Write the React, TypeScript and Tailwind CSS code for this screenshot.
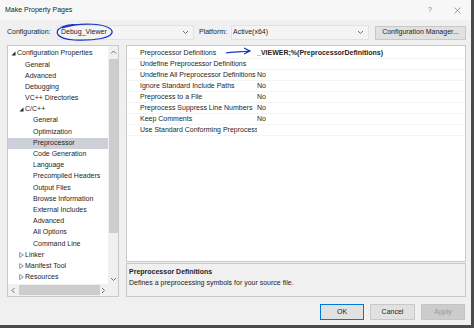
import React from 'react';

const font = { fontFamily: '"Liberation Sans", Arial, sans-serif' };

const treeRows: { label: string; level: number; icon?: 'open' | 'closed'; selected?: boolean }[] = [
  { label: 'Configuration Properties', level: 0, icon: 'open' },
  { label: 'General', level: 1 },
  { label: 'Advanced', level: 1 },
  { label: 'Debugging', level: 1 },
  { label: 'VC++ Directories', level: 1 },
  { label: 'C/C++', level: 1, icon: 'open' },
  { label: 'General', level: 2 },
  { label: 'Optimization', level: 2 },
  { label: 'Preprocessor', level: 2, selected: true },
  { label: 'Code Generation', level: 2 },
  { label: 'Language', level: 2 },
  { label: 'Precompiled Headers', level: 2 },
  { label: 'Output Files', level: 2 },
  { label: 'Browse Information', level: 2 },
  { label: 'External Includes', level: 2 },
  { label: 'Advanced', level: 2 },
  { label: 'All Options', level: 2 },
  { label: 'Command Line', level: 2 },
  { label: 'Linker', level: 1, icon: 'closed' },
  { label: 'Manifest Tool', level: 1, icon: 'closed' },
  { label: 'Resources', level: 1, icon: 'closed' },
  { label: 'XML Document Generator', level: 1, icon: 'closed' },
];

const props: [string, string][] = [
  ['Preprocessor Definitions', '_VIEWER;%(PreprocessorDefinitions)'],
  ['Undefine Preprocessor Definitions', ''],
  ['Undefine All Preprocessor Definitions', 'No'],
  ['Ignore Standard Include Paths', 'No'],
  ['Preprocess to a File', 'No'],
  ['Preprocess Suppress Line Numbers', 'No'],
  ['Keep Comments', 'No'],
  ['Use Standard Conforming Preprocessor', ''],
];

function Chevron({ dir = 'down' }: { dir?: 'down' | 'up' | 'left' | 'right' }) {
  const d = {
    down: 'M1 2 L3.5 4.5 L6 2',
    up: 'M1 4.5 L3.5 2 L6 4.5',
    left: 'M4.5 1 L2 3.5 L4.5 6',
    right: 'M2 1 L4.5 3.5 L2 6',
  }[dir];
  return (
    <svg width="7" height="7" viewBox="0 0 7 7" fill="none" stroke="#606060" strokeWidth="0.9">
      <path d={d} />
    </svg>
  );
}

function TreeIcon({ kind }: { kind: 'open' | 'closed' }) {
  return kind === 'open' ? (
    <svg width="5" height="5" viewBox="0 0 5 5"><path d="M4.5 0.5 L4.5 4.5 L0.5 4.5 Z" fill="#222" /></svg>
  ) : (
    <svg width="5" height="6" viewBox="0 0 5 6"><path d="M0.7 0.5 L4.3 3 L0.7 5.5 Z" fill="none" stroke="#666" strokeWidth="0.7" /></svg>
  );
}

export default function App() {
  return (
    <div className="w-[474px] h-[328px] bg-[#4a4a4a] text-[7px] text-[#1e1e1e] overflow-hidden" style={font}>
      <div className="w-[471px] h-[325px] bg-[#f0f0f0] flex flex-col relative">
        {/* title bar */}
        <div className="h-[20px] bg-[#f7f7f7] flex items-center pl-[5px] pr-[10px]">
          <span className="flex-1 text-[7px]">Make Property Pages</span>
          <span className="text-[#777] text-[7px] mr-[22px]">?</span>
          <svg width="7" height="7" viewBox="0 0 7 7" stroke="#777" strokeWidth="0.7"><path d="M0.5 0.5 L6.5 6.5 M6.5 0.5 L0.5 6.5" /></svg>
        </div>

        {/* configuration row */}
        <div className="flex items-center h-[15px] mt-[5px] pl-[7px]">
          <span className="w-[50px]">Configuration:</span>
          <div className="w-[137px] h-[15px] border border-[#e2e2e2] bg-[#f4f4f4] flex items-center pl-[3px] pr-[4px]">
            <span className="flex-1">Debug_Viewer</span>
            <Chevron />
          </div>
          <span className="ml-[5px] w-[32px]">Platform:</span>
          <div className="w-[138px] h-[15px] border border-[#e2e2e2] bg-[#f4f4f4] flex items-center pl-[1px] pr-[4px]">
            <span className="flex-1">Active(x64)</span>
            <Chevron />
          </div>
          <div className="ml-[6px] w-[91px] h-[14px] bg-[#e1e1e1] border border-[#c8c8c8] flex items-center justify-center">
            Configuration Manager...
          </div>
        </div>

        {/* main panels */}
        <div className="flex mt-[5px] pl-[7px] h-[252px]">
          {/* tree */}
          <div className="w-[112px] h-[252px] border border-[#c9c9c9] bg-white flex flex-col">
            <div className="flex flex-1 min-h-0">
              <div className="flex-1 pt-[2px] overflow-hidden">
                {treeRows.map((r, i) => (
                  <div
                    key={i}
                    className={`h-[11.2px] flex items-center whitespace-nowrap ${r.selected ? 'bg-[#cdd0d8]' : ''}`}
                    style={{ paddingLeft: 3 + r.level * 8 }}
                  >
                    <span className="w-[6px] flex items-center">{r.icon && <TreeIcon kind={r.icon} />}</span>
                    <span className={r.icon ? '' : ''}>{r.label}</span>
                  </div>
                ))}
              </div>
              <div className="w-[10px] bg-[#f0f0f0] flex flex-col items-center">
                <div className="h-[13px] flex items-center"><Chevron dir="up" /></div>
                <div className="w-[9px] h-[174px] bg-[#cdcdcd]" />
                <div className="flex-1" />
                <div className="h-[10px] flex items-center"><Chevron dir="down" /></div>
              </div>
            </div>
            <div className="h-[12px] flex bg-[#f0f0f0]">
              <div className="flex-1 flex items-center">
                <span className="w-[11px] flex justify-center"><Chevron dir="left" /></span>
                <div className="w-[81px] h-[10px] bg-[#cdcdcd]" />
                <span className="w-[7px] flex justify-center"><Chevron dir="right" /></span>
              </div>
              <div className="w-[10px]" />
            </div>
          </div>

          {/* grid + description */}
          <div className="ml-[7px] w-[340px] flex flex-col">
            <div className="h-[217px] border border-[#c9c9c9] bg-white pt-[2px]">
              {props.map(([name, value], i) => (
                <div key={i} className="h-[11px] flex items-center border-b border-[#f4f4f4]">
                  <span className="w-[12px]" />
                  <span className="w-[118px] pl-[1px] whitespace-nowrap overflow-hidden">{name}</span>
                  <span className={i === 0 ? 'font-bold' : ''}>{value}</span>
                </div>
              ))}
            </div>
            <div className="mt-[1px] h-[34px] border border-[#c9c9c9] bg-[#f0f0f0] px-[2px] pt-[2px]">
              <div className="font-bold leading-[11px]">Preprocessor Definitions</div>
              <div className="leading-[11px]">Defines a preprocessing symbols for your source file.</div>
            </div>
          </div>
        </div>

        {/* buttons */}
        <div className="flex justify-end gap-[6px] mt-[7px] pr-[6px]">
          <div className="w-[44px] h-[16px] bg-[#e1e1e1] border border-[#0078d7] flex items-center justify-center">OK</div>
          <div className="w-[45px] h-[16px] bg-[#e1e1e1] border border-[#c8c8c8] flex items-center justify-center">Cancel</div>
          <div className="w-[44px] h-[16px] bg-[#cccccc] border border-[#c4c4c4] text-[#9a9a9a] flex items-center justify-center">Apply</div>
        </div>

        {/* hand-drawn annotations */}
        <svg className="absolute left-0 top-0 pointer-events-none" width="471" height="325" fill="none" stroke="#1b33c4" strokeWidth="1.2">
          <path d="M62 28 C80 22 108 23 112 31 C114 38 94 41 74 40 C58 39 52 32 62 27 C66 25 72 24 78 25" />
          <path d="M226 53 C232 52 240 52 250 51 M244 48 L250 51 L244 54" />
        </svg>
      </div>
    </div>
  );
}
